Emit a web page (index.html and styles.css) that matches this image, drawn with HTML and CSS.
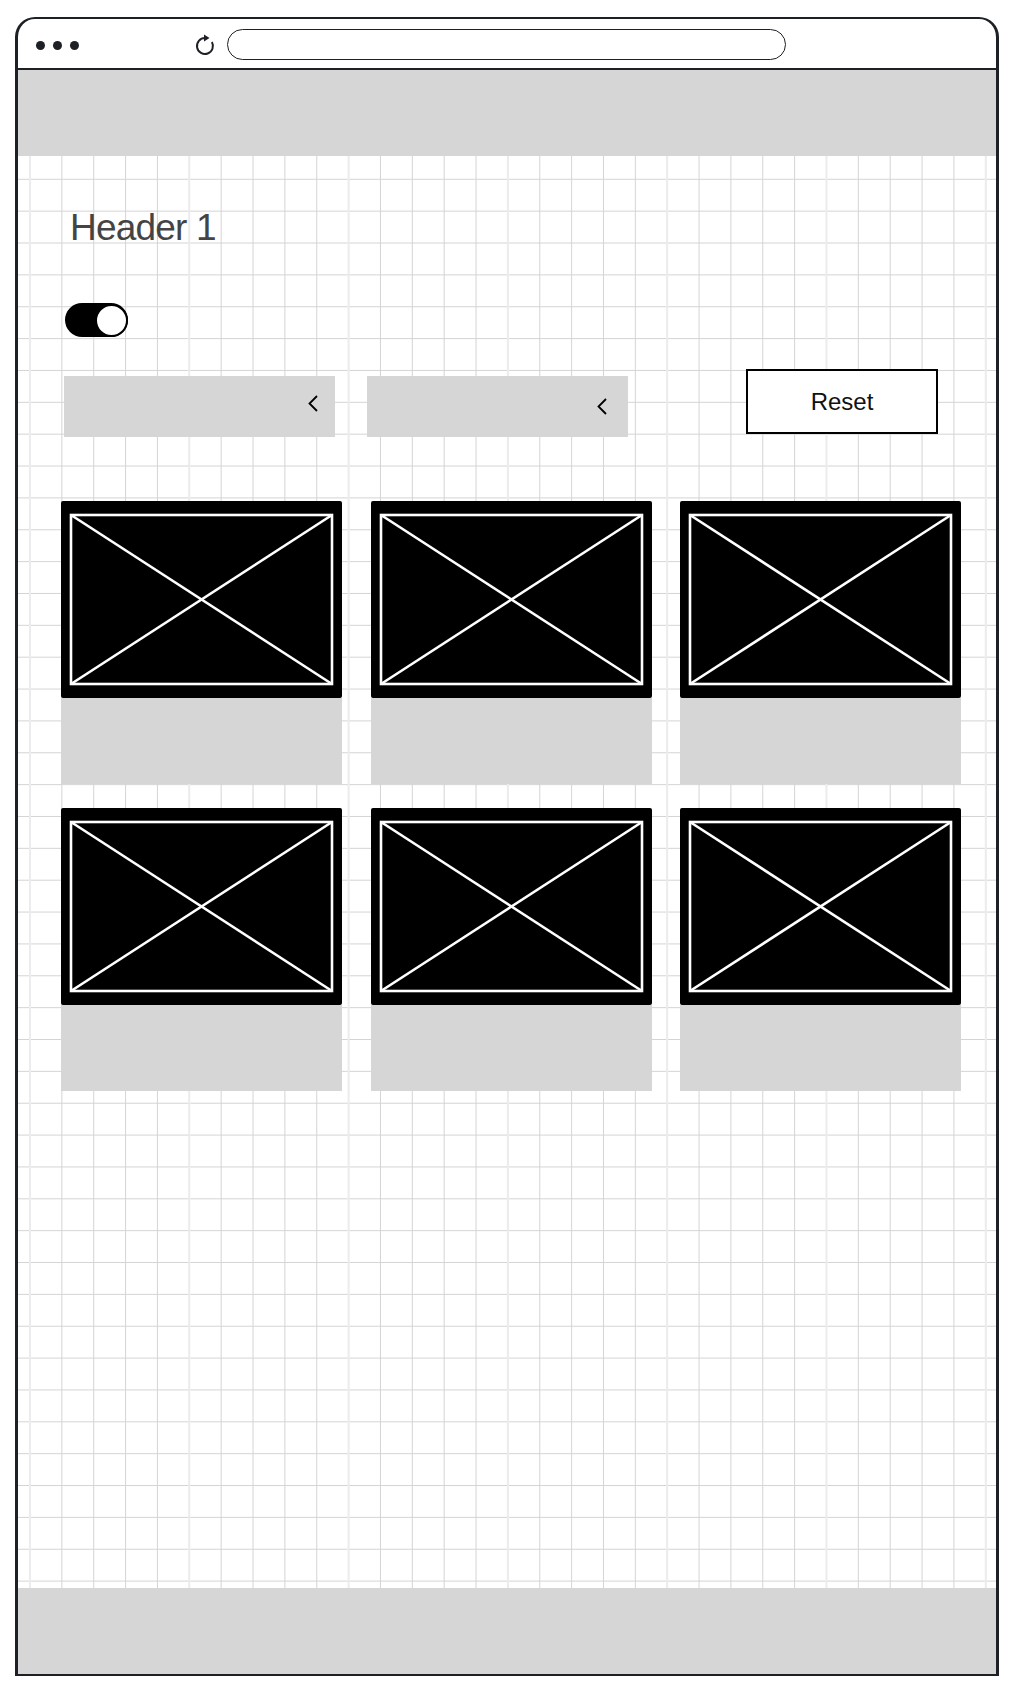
FILE: index.html
```html
<!DOCTYPE html>
<html lang="en-US">
<head>
    <meta charset="UTF-8">
    <title>Wireframe</title>
    <link rel="stylesheet" href="styles.css">
</head>
<body>
    <div class="browser">
        <div class="toolbar">
            <div class="dots">
                <span class="dot"></span><span class="dot"></span><span class="dot"></span>
            </div>
            <svg class="reload" width="20" height="22" viewBox="0 0 20 22">
                <path d="M10 4 A8 8 0 1 0 16.9 8" fill="none" stroke="#1d2025" stroke-width="2"/>
                <path d="M9 0.5 L14.5 4 L9 7.5 Z" fill="#1d2025"/>
            </svg>
            <div class="address"></div>
        </div>

        <div class="top-bar"></div>

        <div class="canvas">
            <h1 class="title">Header 1</h1>

            <div class="toggle"><span class="knob"></span></div>

            <div class="controls">
                <div class="select first">
                    <svg width="10" height="17" viewBox="0 0 10 17"><polyline points="9,1 1.5,8.5 9,16" fill="none" stroke="#000" stroke-width="1.8"/></svg>
                </div>
                <div class="select second">
                    <svg width="10" height="17" viewBox="0 0 10 17"><polyline points="9,1 1.5,8.5 9,16" fill="none" stroke="#000" stroke-width="1.8"/></svg>
                </div>
                <button class="reset">Reset</button>
            </div>

            <div class="cards">
                <div class="card">
                    <div class="thumb">
                        <svg viewBox="0 0 281 197" preserveAspectRatio="none"><rect x="10" y="14" width="261" height="169" /><line x1="10" y1="14" x2="271" y2="183"/><line x1="271" y1="14" x2="10" y2="183"/></svg>
                    </div>
                    <div class="caption"></div>
                </div>
                <div class="card">
                    <div class="thumb">
                        <svg viewBox="0 0 281 197" preserveAspectRatio="none"><rect x="10" y="14" width="261" height="169" /><line x1="10" y1="14" x2="271" y2="183"/><line x1="271" y1="14" x2="10" y2="183"/></svg>
                    </div>
                    <div class="caption"></div>
                </div>
                <div class="card">
                    <div class="thumb">
                        <svg viewBox="0 0 281 197" preserveAspectRatio="none"><rect x="10" y="14" width="261" height="169" /><line x1="10" y1="14" x2="271" y2="183"/><line x1="271" y1="14" x2="10" y2="183"/></svg>
                    </div>
                    <div class="caption"></div>
                </div>
                <div class="card">
                    <div class="thumb">
                        <svg viewBox="0 0 281 197" preserveAspectRatio="none"><rect x="10" y="14" width="261" height="169" /><line x1="10" y1="14" x2="271" y2="183"/><line x1="271" y1="14" x2="10" y2="183"/></svg>
                    </div>
                    <div class="caption"></div>
                </div>
                <div class="card">
                    <div class="thumb">
                        <svg viewBox="0 0 281 197" preserveAspectRatio="none"><rect x="10" y="14" width="261" height="169" /><line x1="10" y1="14" x2="271" y2="183"/><line x1="271" y1="14" x2="10" y2="183"/></svg>
                    </div>
                    <div class="caption"></div>
                </div>
                <div class="card">
                    <div class="thumb">
                        <svg viewBox="0 0 281 197" preserveAspectRatio="none"><rect x="10" y="14" width="261" height="169" /><line x1="10" y1="14" x2="271" y2="183"/><line x1="271" y1="14" x2="10" y2="183"/></svg>
                    </div>
                    <div class="caption"></div>
                </div>
            </div>
        </div>

        <div class="bottom-bar"></div>
    </div>
</body>
</html>
```

FILE: styles.css
```css
body {
    margin: 0;
    background: #fff;
    font-family: 'Liberation Sans', Arial, sans-serif;
}

.browser {
    margin: 17px 0 0 15px;
    width: 984px;
    height: 1659px;
    box-sizing: border-box;
    border: 2px solid #1d2025;
    border-left-width: 3px;
    border-right-width: 3px;
    border-radius: 20px 20px 0 0;
    display: flex;
    flex-direction: column;
    overflow: hidden;
}

.toolbar {
    height: 49px;
    flex: none;
    border-bottom: 2px solid #1d2025;
    display: flex;
    align-items: center;
    padding-left: 18px;
}

.dots {
    display: flex;
    gap: 8px;
    margin-top: 3px;
}

.dot {
    width: 9px;
    height: 9px;
    border-radius: 50%;
    background: #1d2025;
}

.reload {
    margin-left: 116px;
    margin-top: 2px;
}

.address {
    margin-left: 12px;
    width: 557px;
    height: 29px;
    border: 1.5px solid #1d2025;
    border-radius: 16px;
    margin-top: 1px;
}

.top-bar,
.bottom-bar {
    height: 86px;
    flex: none;
    background: #d6d6d6;
}

/* grid paper background */
.canvas {
    flex: 1;
    padding: 50px 0 0 43px;
    background-color: #fff;
    background-image:
        linear-gradient(to right, #ececec 2px, transparent 2px),
        linear-gradient(to right, #d4d4d4 1px, transparent 1px),
        linear-gradient(to bottom, #d4d4d4 1px, transparent 1px);
    background-size: 159.3px 100%, 31.86px 31.86px, 31.86px 31.86px;
    background-position: 11px 0, 11.5px 22.8px, 11.5px 22.8px;
}

.title {
    margin: 0 0 0 9px;
    font-size: 37px;
    line-height: 44px;
    font-weight: 400;
    color: #444;
    letter-spacing: -0.8px;
}

.toggle {
    margin: 53px 0 0 4px;
    width: 63px;
    height: 34px;
    box-sizing: border-box;
    border-radius: 17px;
    background: #000;
    display: flex;
    justify-content: flex-end;
    align-items: center;
}

.knob {
    width: 33px;
    height: 33px;
    box-sizing: border-box;
    border-radius: 50%;
    background: #fff;
    border: 2px solid #000;
}

.controls {
    display: flex;
    align-items: flex-start;
    margin-top: 32px;
}

.select {
    height: 61px;
    margin-top: 7px;
    background: #d6d6d6;
    display: flex;
    align-items: center;
    justify-content: flex-end;
}

.select.first {
    width: 271px;
    margin-left: 3px;
    padding-right: 17px;
    box-sizing: border-box;
}

.select.first svg {
    margin-top: -7px;
}

.select.second {
    width: 261px;
    margin-left: 32px;
    padding-right: 21px;
    box-sizing: border-box;
}

.reset {
    margin-left: 118px;
    width: 192px;
    height: 65px;
    border: 2px solid #000;
    background: #fff;
    font-family: 'Liberation Sans', Arial, sans-serif;
    font-size: 24px;
    color: #111;
    padding: 0;
}

.cards {
    margin-top: 64px;
    display: grid;
    grid-template-columns: repeat(3, 281px);
    column-gap: 28.5px;
    row-gap: 24px;
}

.thumb {
    height: 197px;
    background: #000;
    border-radius: 2px;
}

.thumb svg {
    display: block;
    width: 100%;
    height: 100%;
}

.thumb rect,
.thumb line {
    fill: none;
    stroke: #fff;
    stroke-width: 2.6;
}

.caption {
    height: 86px;
    background: #d6d6d6;
}
```
